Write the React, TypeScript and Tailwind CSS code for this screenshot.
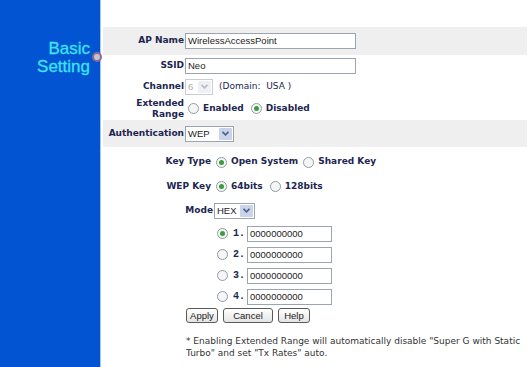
import React from 'react';

const label = "font-['DejaVu_Sans',sans-serif] font-bold text-[9px] text-[#1c2650]";
const body = "font-['DejaVu_Sans',sans-serif] font-bold text-[9px] text-[#1c2650]";
const field = "font-['Liberation_Sans',Arial,sans-serif] text-[9.5px] text-[#222]";

const Radio = ({ checked }: { checked?: boolean }) => (
  <span className="inline-flex w-[11px] h-[11px] rounded-full border border-[#8f9ba6] bg-[#f6f6f6] items-center justify-center shrink-0">
    {checked && <span className="w-[5px] h-[5px] rounded-full bg-[#3a9c3c]" />}
  </span>
);

const Chevron = ({ faded }: { faded?: boolean }) => (
  <svg width="7" height="5" viewBox="0 0 7 5">
    <path d="M0.5 0.8 L3.5 3.8 L6.5 0.8" fill="none" stroke={faded ? '#b8bcc8' : '#4d6185'} strokeWidth="1.6" />
  </svg>
);

const Select = ({ value, width, disabled }: { value: string; width: string; disabled?: boolean }) => (
  <div className={`flex h-[16px] border ${disabled ? 'border-[#c9ccd2]' : 'border-[#9aa5b0]'} bg-white ${width}`}>
    <span className={`flex-1 pl-[2px] leading-[14px] ${field} ${disabled ? 'text-[#b0b0b0]' : ''}`}>{value}</span>
    <span className={`w-[13px] m-[1px] flex items-center justify-center rounded-[1px] ${disabled ? 'bg-[#eef0f4]' : 'bg-[#c9d3ea]'}`}>
      <Chevron faded={disabled} />
    </span>
  </div>
);

const Input = ({ value, width }: { value: string; width: string }) => (
  <div className={`h-[16px] border border-[#9aa5b0] bg-white pl-[2px] leading-[14px] ${field} ${width}`}>{value}</div>
);

const Button = ({ text, width }: { text: string; width: string }) => (
  <div className={`h-[15px] rounded-[3px] border border-[#5a5a5a] bg-gradient-to-b from-white to-[#e4e4e4] flex items-center justify-center leading-none ${field} text-[#111] ${width}`}>
    {text}
  </div>
);

export default function App() {
  return (
    <div className="w-[530px] h-[367px] flex bg-white overflow-hidden">
      {/* Sidebar */}
      <div className="relative w-[101px] shrink-0 bg-[#0254d2] border-r border-[#a9c6ee]">
        <div className="pt-[40px] pr-[10px] text-right font-['Liberation_Sans',Arial,sans-serif] text-[17px] leading-[18px] text-[#3ae4f2] [-webkit-text-stroke:0.3px_#3ae4f2]">
          Basic
          <br />
          Setting
        </div>
        <span className="absolute left-[92px] top-[52px] w-[10px] h-[10px] rounded-full bg-[#c7c1d2] border-2 border-[#8a6c92]" />
      </div>

      {/* Form */}
      <div className="flex-1 ml-[2px] mr-[3px] pt-[27px] flex flex-col">
        <div className="h-[28px] bg-[#efefef] flex items-center">
          <span className={`w-[82px] text-right pr-[1px] ${label}`}>AP Name</span>
          <Input value="WirelessAccessPoint" width="w-[171px]" />
        </div>
        <div className="h-[21px] flex items-center">
          <span className={`w-[82px] text-right pr-[1px] ${label}`}>SSID</span>
          <Input value="Neo" width="w-[171px]" />
        </div>
        <div className="h-[21px] flex items-center">
          <span className={`w-[82px] text-right pr-[1px] ${label}`}>Channel</span>
          <Select value="6" width="w-[28px]" disabled />
          <span className="ml-[6px] font-['DejaVu_Sans',sans-serif] text-[9px] text-[#1c2650]">(Domain:&nbsp; USA )</span>
        </div>
        <div className="h-[23px] flex items-center">
          <span className={`w-[82px] text-right pr-[1px] leading-[11px] ${label}`}>
            Extended
            <br />
            Range
          </span>
          <span className="ml-[3px] flex items-center gap-[4px]">
            <Radio />
            <span className={body}>Enabled</span>
          </span>
          <span className="ml-[7px] flex items-center gap-[4px]">
            <Radio checked />
            <span className={body}>Disabled</span>
          </span>
        </div>
        <div className="h-[27px] bg-[#efefef] flex items-center">
          <span className={`w-[82px] text-right pr-[1px] ${label}`}>Authentication</span>
          <Select value="WEP" width="w-[49px]" />
        </div>

        <div className="h-[26px] mt-[2px] flex items-center">
          <span className={`w-[109px] text-right pr-[1px] ${label}`}>Key Type</span>
          <span className="ml-[4px] flex items-center gap-[4px]">
            <Radio checked />
            <span className={body}>Open System</span>
          </span>
          <span className="ml-[5px] flex items-center gap-[4px]">
            <Radio />
            <span className={body}>Shared Key</span>
          </span>
        </div>
        <div className="h-[23px] flex items-center">
          <span className={`w-[109px] text-right pr-[1px] ${label}`}>WEP Key</span>
          <span className="ml-[4px] flex items-center gap-[4px]">
            <Radio checked />
            <span className={body}>64bits</span>
          </span>
          <span className="ml-[7px] flex items-center gap-[4px]">
            <Radio />
            <span className={body}>128bits</span>
          </span>
        </div>
        <div className="h-[25px] flex items-center">
          <span className={`w-[111px] text-right pr-[1px] ${label}`}>Mode</span>
          <Select value="HEX" width="w-[41px]" />
        </div>

        {[1, 2, 3, 4].map((n) => (
          <div key={n} className="h-[21px] flex items-center pl-[114px]">
            <Radio checked={n === 1} />
            <span className="ml-[5px] w-[14px] font-['Liberation_Mono',monospace] font-bold text-[10px] text-[#1c2650]">{n}.</span>
            <Input value="0000000000" width="w-[85px]" />
          </div>
        ))}

        <div className="mt-[1px] flex items-center gap-[5px] pl-[83px]">
          <Button text="Apply" width="w-[32px]" />
          <Button text="Cancel" width="w-[50px]" />
          <Button text="Help" width="w-[32px]" />
        </div>

        <p className="mt-[12px] pl-[83px] pr-[1px] font-['DejaVu_Sans',sans-serif] text-[9px] leading-[12px] text-[#333]">
          * Enabling Extended Range will automatically disable "Super G with Static Turbo" and set "Tx Rates" auto.
        </p>
      </div>
    </div>
  );
}
